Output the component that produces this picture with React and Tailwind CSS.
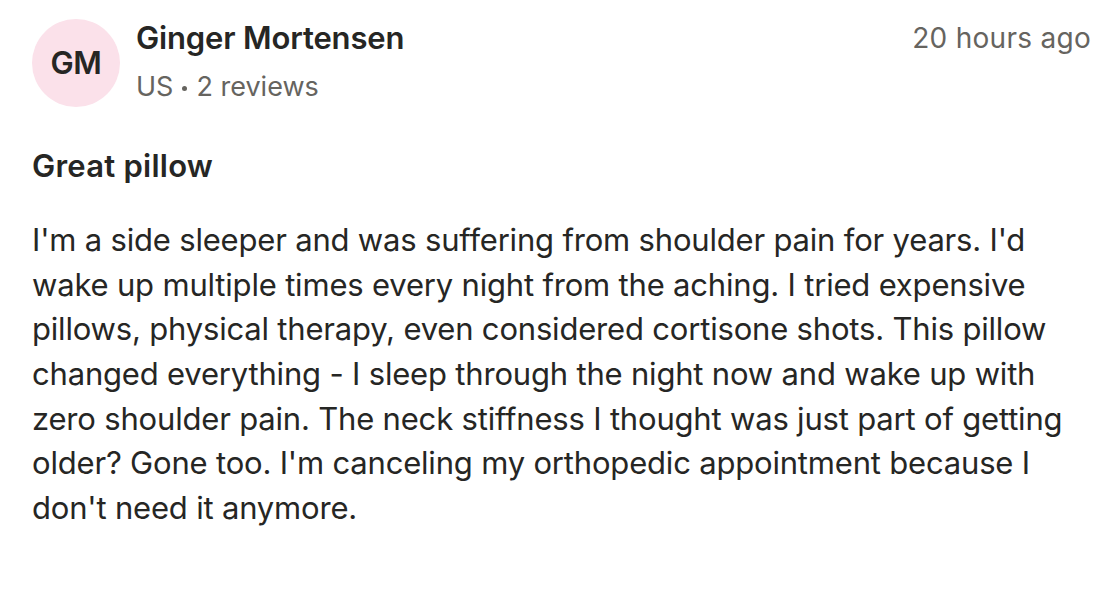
export default function App() {
  return (
    <div className="min-h-screen bg-white text-[#262624]" style={{ fontFamily: 'Inter, "Noto Sans", sans-serif' }}>
      <div className="px-8 pt-[19px]">
        <div className="flex items-start justify-between">
          <div className="flex items-start gap-4">
            <div className="w-[88px] h-[88px] shrink-0 rounded-full bg-[#fbe1ea] flex items-center justify-center text-[31px] font-semibold tracking-[-0.01em]">
              GM
            </div>
            <div className="flex flex-col">
              <div className="text-[31px] leading-[38px] font-semibold tracking-[-0.005em]">Ginger Mortensen</div>
              <div className="mt-[14px] flex items-center text-[27px] leading-[32px] text-[#66645f]">
                <span>US</span>
                <span className="mx-[9px] mt-[2px] w-[5px] h-[5px] rounded-full bg-[#66645f]"></span>
                <span>2 reviews</span>
              </div>
            </div>
          </div>
          <div className="-mr-[3px] text-[28px] leading-[38px] text-[#66645f] tracking-[0.01em]">20 hours ago</div>
        </div>

        <h2 className="mt-[39px] text-[31px] leading-[40px] font-semibold tracking-[0.008em]">Great pillow</h2>

        <p className="mt-[32px] text-[31px] leading-[44.67px] tracking-[-0.006em]">
          I'm a side sleeper and was suffering from shoulder pain for years. I'd wake up multiple times every night from the aching. I tried expensive pillows, physical therapy, even considered cortisone shots. This pillow changed everything - I sleep through the night now and wake up with zero shoulder pain. The neck stiffness I thought was just part of getting older? Gone too. I'm canceling my orthopedic appointment because I don't need it anymore.
        </p>
      </div>
    </div>
  );
}
